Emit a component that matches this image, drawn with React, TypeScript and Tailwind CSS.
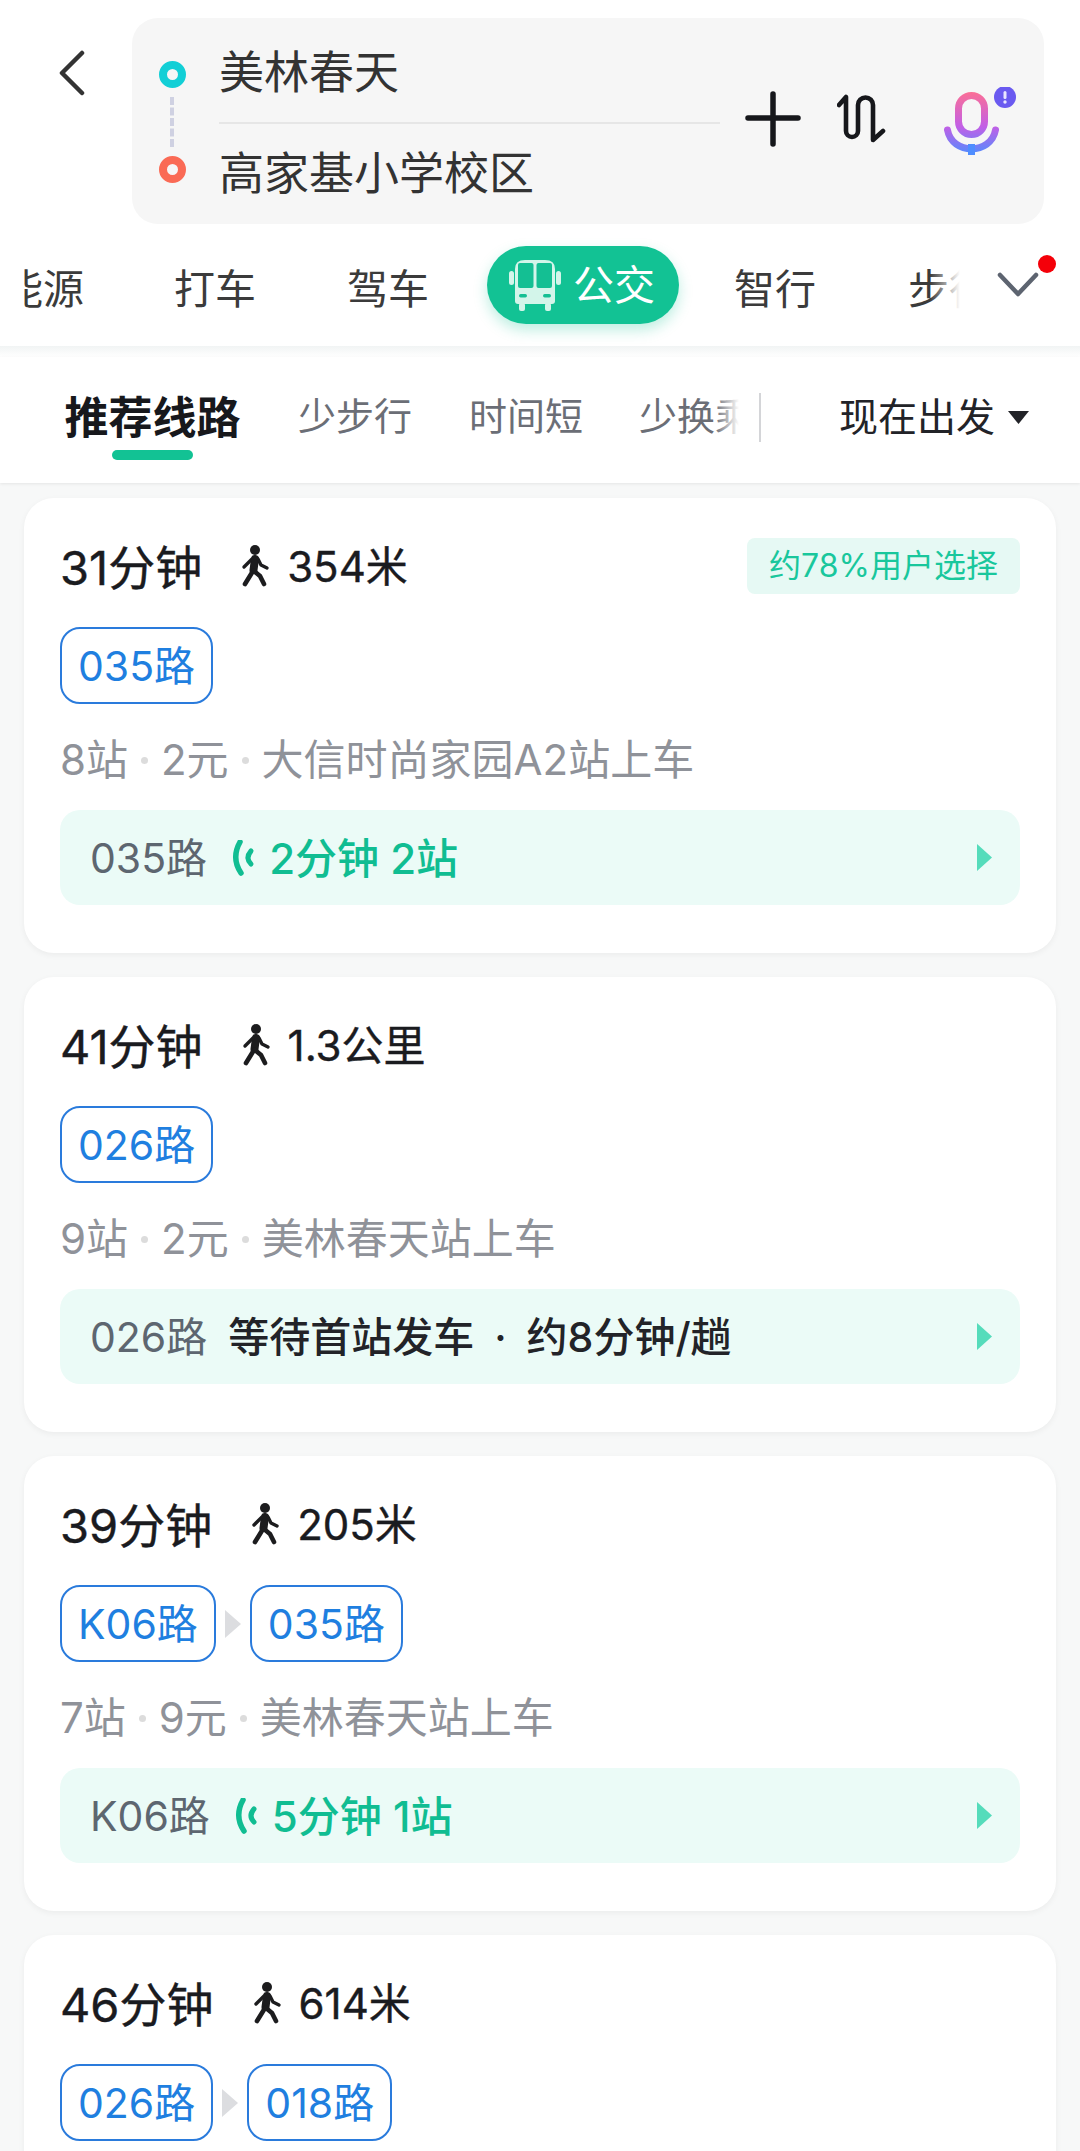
const fontClass = "font-['Inter','Noto_Sans_CJK_SC',sans-serif]";

type Route = {
  time: string
  walk: string
  lines: string[]
  stops: string
  price: string
  board: string
  badge?: string
  rowLine?: string
  signal?: string
  wait?: string
}

const routes: Route[] = [
  { time: '31分钟', walk: '354米', lines: ['035路'], stops: '8站', price: '2元', board: '大信时尚家园A2站上车', badge: '约78%用户选择', rowLine: '035路', signal: '2分钟 2站' },
  { time: '41分钟', walk: '1.3公里', lines: ['026路'], stops: '9站', price: '2元', board: '美林春天站上车', rowLine: '026路', wait: '等待首站发车 · 约8分钟/趟' },
  { time: '39分钟', walk: '205米', lines: ['K06路', '035路'], stops: '7站', price: '9元', board: '美林春天站上车', rowLine: 'K06路', signal: '5分钟 1站' },
  { time: '46分钟', walk: '614米', lines: ['026路', '018路'], stops: '8站', price: '4元', board: '美林春天站上车', rowLine: '026路', signal: '3分钟 1站' },
]

function Walker() {
  return (
    <svg width="30" height="42" viewBox="0 0 30 42" fill="none" stroke="#1c1c1e" strokeLinecap="round" strokeLinejoin="round">
      <circle cx="15" cy="5" r="5" fill="#1c1c1e" stroke="none" />
      <path d="M15 14 L13.5 25" strokeWidth="8" />
      <path d="M13 26 L5 39" strokeWidth="4.6" />
      <path d="M14 26 L20 31 L24 39" strokeWidth="4.6" />
      <path d="M12 14 L4 22" strokeWidth="3.4" />
      <path d="M18 14 L21 20 L27 23" strokeWidth="3.4" />
    </svg>
  )
}

function Signal() {
  return (
    <svg width="24" height="36" viewBox="0 0 24 36" fill="none" stroke="#10bd92" strokeLinecap="round">
      <path d="M9 2 Q0 18 10 33" strokeWidth="5.5" />
      <path d="M20 11 Q14 18 20 24" strokeWidth="5" />
    </svg>
  )
}

function BusIcon() {
  return (
    <svg className="shrink-0" width="52" height="52" viewBox="0 0 52 52">
      <rect x="0" y="12" width="5" height="14" rx="2.5" fill="#d3f5ea" />
      <rect x="47" y="12" width="5" height="14" rx="2.5" fill="#d3f5ea" />
      <path d="M6 10 Q6 1 16 1 H36 Q46 1 46 10 V42 Q46 45 43 45 H9 Q6 45 6 42 Z" fill="#d3f5ea" />
      <rect x="9" y="4" width="15.5" height="25" rx="2" fill="#14bf93" />
      <rect x="27.5" y="4" width="15.5" height="25" rx="2" fill="#14bf93" />
      <rect x="10" y="35" width="8" height="3.5" rx="1.7" fill="#14bf93" />
      <rect x="34" y="35" width="8" height="3.5" rx="1.7" fill="#14bf93" />
      <rect x="10" y="44" width="6" height="8" rx="2" fill="#d3f5ea" />
      <rect x="36" y="44" width="6" height="8" rx="2" fill="#d3f5ea" />
    </svg>
  )
}

function MicIcon() {
  return (
    <svg width="74" height="71" viewBox="0 -5 74 71" fill="none">
      <defs>
        <linearGradient id="micGrad" x1="0" y1="0" x2="0" y2="63" gradientUnits="userSpaceOnUse">
          <stop offset="0" stopColor="#fb6f96" />
          <stop offset="0.55" stopColor="#c25fe6" />
          <stop offset="1" stopColor="#4f8dff" />
        </linearGradient>
      </defs>
      <rect x="14.5" y="3.5" width="26" height="39" rx="13" stroke="url(#micGrad)" strokeWidth="7" />
      <path d="M3.5 38 C8 63 47 63 51.5 38" stroke="url(#micGrad)" strokeWidth="7" strokeLinecap="round" />
      <rect x="24" y="52" width="7" height="11" fill="#4f8dff" />
      <circle cx="61" cy="5" r="11" fill="#6a5af0" />
      <rect x="59.5" y="-1" width="3" height="8" rx="1.5" fill="#e9e6ff" />
      <circle cx="61" cy="10" r="1.7" fill="#e9e6ff" />
    </svg>
  )
}

function SearchBar() {
  return (
    <div className="flex h-[224px] shrink-0 items-start bg-white pt-[18px]">
      <div className="flex h-[206px] w-[132px] shrink-0 justify-center pt-[32px] pl-[12px]">
        <svg width="30" height="46" viewBox="0 0 30 46" fill="none" stroke="#333" strokeWidth="4.5" strokeLinecap="round" strokeLinejoin="round">
          <path d="M25 3 L5 23 L25 43" />
        </svg>
      </div>
      <div className="flex h-[206px] w-[912px] items-center rounded-[26px] bg-[#f6f6f6]">
        <div className="flex h-full w-[87px] shrink-0 flex-col items-center pt-[43px] pr-[7px]">
          <div className="h-[27px] w-[27px] rounded-full border-[8px] border-[#12cfd6]" />
          <div className="my-[9px] h-[50px] border-l-[4px] border-dashed border-[#cfd1e2]" />
          <div className="h-[27px] w-[27px] rounded-full border-[8px] border-[#fa6a55]" />
        </div>
        <div className="w-[501px] shrink-0 text-[45px] leading-[52px] text-[#333]">
          <div className="flex h-[106px] items-center border-b-2 border-[#e6e6e6] pt-[5px]">美林春天</div>
          <div className="flex h-[100px] items-center">高家基小学校区</div>
        </div>
        <div className="relative ml-[25px] flex h-full flex-1 items-center">
          <svg className="mt-[-4px]" width="56" height="56" viewBox="0 0 56 56" stroke="#16171b" strokeWidth="5.5" strokeLinecap="round">
            <path d="M28 3 V53 M3 27 H53" />
          </svg>
          <svg className="ml-[36px] mt-[-4px]" width="50" height="52" viewBox="0 0 50 52" fill="none" stroke="#16171b" strokeWidth="4.6" strokeLinecap="round" strokeLinejoin="round">
            <path d="M2 12 L9 4 V38 A6 6 0 0 0 21 38 V12 A7.5 7.5 0 0 1 36 12 V47 L46 38" />
          </svg>
          <div className="ml-[57px] mt-[3px]">
            <MicIcon />
          </div>
        </div>
      </div>
    </div>
  )
}

function ModeTabs() {
  return (
    <div className="relative flex h-[122px] shrink-0 bg-white text-[41px] text-[#3b3b3b]">
      <div className="relative ml-[24px] h-full w-[936px] overflow-hidden">
        <div className="flex h-full items-start whitespace-nowrap">
          <span className="ml-[-22px] mt-[41px] shrink-0 leading-[48px]">能源</span>
          <span className="ml-[90px] mt-[41px] shrink-0 leading-[48px]">打车</span>
          <span className="ml-[91px] mt-[41px] shrink-0 leading-[48px]">驾车</span>
          <div className="ml-[58px] mt-[22px] flex h-[78px] w-[192px] shrink-0 items-center rounded-full bg-[#12c294] pl-[22px] text-white shadow-[0_6px_14px_rgba(18,194,148,0.28)]">
            <BusIcon />
            <span className="ml-[12px] leading-[48px]">公交</span>
          </div>
          <span className="ml-[55px] mt-[41px] shrink-0 leading-[48px]">智行</span>
          <span className="ml-[92px] mt-[41px] shrink-0 leading-[48px]">步行</span>
        </div>
        <div className="absolute inset-y-0 right-0 w-[30px] bg-gradient-to-r from-white/0 to-white" />
      </div>
      <div className="relative flex-1 pl-[37px] pt-[48px]">
        <svg width="42" height="26" viewBox="0 0 42 26" fill="none" stroke="#5d6470" strokeWidth="4.5" strokeLinecap="round" strokeLinejoin="round">
          <path d="M3 3 L21 22 L39 3" />
        </svg>
        <span className="absolute left-[78px] top-[31px] h-[18px] w-[18px] rounded-full bg-[#f40009]" />
      </div>
    </div>
  )
}

function RouteTabs() {
  return (
    <div className="flex h-[126px] shrink-0 items-start bg-white shadow-[0_1px_3px_rgba(0,0,0,0.08)]">
      <div className="ml-[64px] flex h-full w-[177px] shrink-0 flex-col items-center pt-[34px]">
        <span className="text-[44px] font-bold leading-[54px] text-[#17181c]">推荐线路</span>
        <span className="mt-[5px] h-[10px] w-[81px] rounded-full bg-[#12c294]" />
      </div>
      <div className="relative ml-[57px] flex h-full w-[463px] shrink-0 whitespace-nowrap pt-[36px] text-[38px] leading-[46px] text-[#6b6e76]">
        <span>少步行</span>
        <span className="ml-[57px]">时间短</span>
        <span className="ml-[56px]">少换乘</span>
        <div className="absolute right-0 top-0 h-full w-[22px] bg-white" />
        <div className="absolute right-[22px] top-0 h-full w-[24px] bg-gradient-to-r from-white/0 to-white" />
        <div className="absolute right-0 top-[36px] h-[49px] w-[2px] bg-[#d4d5d8]" />
      </div>
      <div className="ml-[78px] flex items-center pt-[37px] text-[39px] leading-[46px] text-[#222328]">
        <span className="whitespace-nowrap">现在出发</span>
        <svg className="ml-[13px]" width="21" height="13" viewBox="0 0 21 13" fill="#222328">
          <path d="M0 0 H21 L10.5 13 Z" />
        </svg>
      </div>
    </div>
  )
}

function LinePill({ name }: { name: string }) {
  return (
    <span className="flex h-[77px] items-center rounded-[20px] border-[2.5px] border-[#2a7bdc] px-[16px] pt-[2px] text-[41px] leading-none text-[#1f7fe0]">
      {name}
    </span>
  )
}

function Dot() {
  return <span className="mx-[13px] h-[7px] w-[7px] shrink-0 rounded-full bg-[#dcdcdc]" />
}

function RouteCard({ route }: { route: Route }) {
  return (
    <div className="h-[455px] shrink-0 rounded-[30px] bg-white px-[36px] pt-[40px] shadow-[0_2px_6px_rgba(0,0,0,0.05)]">
      <div className="flex h-[56px] items-center justify-between">
        <div className="flex items-center pt-[2px] text-[#1a1b1f] [-webkit-text-stroke:0.4px_#1a1b1f]">
          <span className="text-[47px] leading-none">{route.time}</span>
          <span className="ml-[38px] mt-[-2px]">
            <Walker />
          </span>
          <span className="ml-[17px] text-[42px] leading-none">{route.walk}</span>
        </div>
        {route.badge && (
          <span className="flex h-[56px] w-[273px] items-center justify-center rounded-[8px] bg-[#e6f9f4] text-[32px] text-[#19c79c]">
            {route.badge}
          </span>
        )}
      </div>
      <div className="mt-[33px] flex h-[77px] items-center">
        {route.lines.map((name, i) => (
          <div key={name} className="flex items-center">
            {i > 0 && (
              <svg className="mx-[9px]" width="16" height="28" viewBox="0 0 16 28" fill="#dcdde0">
                <path d="M0 0 L16 14 L0 28 Z" />
              </svg>
            )}
            <LinePill name={name} />
          </div>
        ))}
      </div>
      <div className="mt-[28px] flex h-[56px] items-center text-[42px] leading-none text-[#8f9299]">
        <span>{route.stops}</span>
        <Dot />
        <span>{route.price}</span>
        <Dot />
        <span>{route.board}</span>
      </div>
      <div className="mt-[22px] flex h-[95px] items-center rounded-[20px] bg-[#ebfbf7] pl-[30px] pr-[28px]">
        <span className="pt-[2px] text-[41px] leading-none text-[#5d6670]">{route.rowLine}</span>
        {route.signal && (
          <>
            <span className="ml-[24px]">
              <Signal />
            </span>
            <span className="ml-[14px] pt-[2px] text-[42px] font-medium leading-none text-[#10bd92]">{route.signal}</span>
          </>
        )}
        {route.wait && (
          <span className="ml-[21px] pt-[2px] text-[41px] font-medium leading-none text-[#222328] [word-spacing:9px]">{route.wait}</span>
        )}
        <svg className="ml-auto" width="15" height="27" viewBox="0 0 15 27" fill="#55dcbb">
          <path d="M0 0 L15 13.5 L0 27 Z" />
        </svg>
      </div>
    </div>
  )
}

export default function App() {
  return (
    <div className={`flex h-[2151px] w-[1080px] flex-col overflow-hidden bg-[#f7f8f8] ${fontClass}`}>
      <SearchBar />
      <ModeTabs />
      <div className="h-[11px] shrink-0 bg-gradient-to-b from-[#f1f4f4] to-white" />
      <RouteTabs />
      <div className="flex flex-col gap-[24px] pl-[24px] pr-[24px] pt-[15px]">
        {routes.map((route) => (
          <RouteCard key={route.time} route={route} />
        ))}
      </div>
    </div>
  )
}
